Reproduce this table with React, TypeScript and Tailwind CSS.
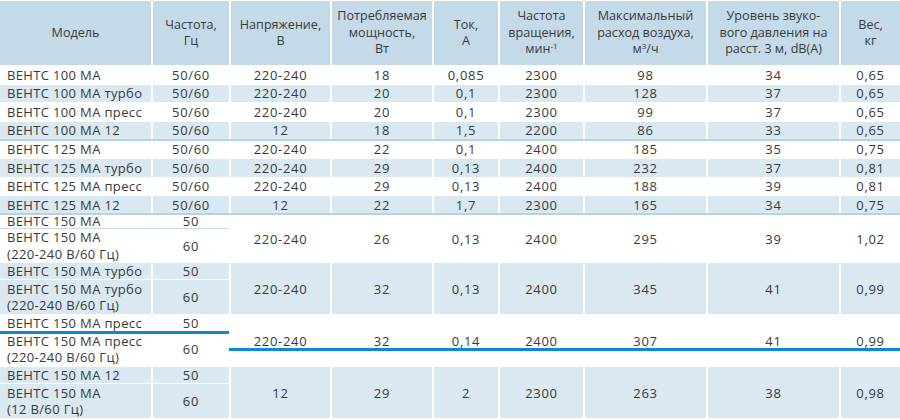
import React from "react";

type Row = { name: string; vals: string[]; shade: boolean; sep?: boolean };

const rows: Row[] = [
  { name: "ВЕНТС 100 МА", vals: ["50/60", "220-240", "18", "0,085", "2300", "98", "34", "0,65"], shade: false },
  { name: "ВЕНТС 100 МА турбо", vals: ["50/60", "220-240", "20", "0,1", "2300", "128", "37", "0,65"], shade: true },
  { name: "ВЕНТС 100 МА пресс", vals: ["50/60", "220-240", "20", "0,1", "2300", "99", "37", "0,65"], shade: false },
  { name: "ВЕНТС 100 МА 12", vals: ["50/60", "12", "18", "1,5", "2200", "86", "33", "0,65"], shade: true, sep: true },
  { name: "ВЕНТС 125 МА", vals: ["50/60", "220-240", "22", "0,1", "2400", "185", "35", "0,75"], shade: false },
  { name: "ВЕНТС 125 МА турбо", vals: ["50/60", "220-240", "29", "0,13", "2400", "232", "37", "0,81"], shade: true },
  { name: "ВЕНТС 125 МА пресс", vals: ["50/60", "220-240", "29", "0,13", "2400", "188", "39", "0,81"], shade: false },
  { name: "ВЕНТС 125 МА 12", vals: ["50/60", "12", "22", "1,7", "2300", "165", "34", "0,75"], shade: true, sep: true },
];

type Pair = { first: string; second: [string, string]; vals: string[]; shade: boolean };

const pairs: Pair[] = [
  { first: "ВЕНТС 150 МА", second: ["ВЕНТС 150 МА", "(220-240 В/60 Гц)"], vals: ["220-240", "26", "0,13", "2400", "295", "39", "1,02"], shade: false },
  { first: "ВЕНТС 150 МА турбо", second: ["ВЕНТС 150 МА турбо", "(220-240 В/60 Гц)"], vals: ["220-240", "32", "0,13", "2400", "345", "41", "0,99"], shade: true },
  { first: "ВЕНТС 150 МА пресс", second: ["ВЕНТС 150 МА пресс", "(220-240 В/60 Гц)"], vals: ["220-240", "32", "0,14", "2400", "307", "41", "0,99"], shade: false },
  { first: "ВЕНТС 150 МА 12", second: ["ВЕНТС 150 МА", "(12 В/60 Гц)"], vals: ["12", "29", "2", "2300", "263", "38", "0,98"], shade: true },
];

const widths = ["w-[152px]", "w-[78px]", "w-[101px]", "w-[102px]", "w-[66px]", "w-[85px]", "w-[123px]", "w-[133px]", "w-[60px]"];

const cell = "border-x-2 border-y border-white p-0 align-middle";
const num = "text-center tracking-[0.7px]";
const name = "border-l-0 pl-[7px] text-left tracking-[0.35px]";
const sepLine = "border-b-2 border-b-[#b7d2e3]";

export default function App() {
  return (
    <div className="w-[900px] h-[420px] overflow-hidden bg-white text-[#3a3a3a] font-['Open_Sans',sans-serif] text-[13px]">
      <div className="relative">
        <table className="w-[900px] table-fixed border-collapse">
          <colgroup>
            {widths.map((w, i) => (
              <col key={i} className={w} />
            ))}
          </colgroup>
          <thead>
            <tr className="h-[65px] bg-[#c4dae8] text-center text-[12.6px] leading-[16.5px]">
              <th className={`${cell} font-normal border-l-0`}>Модель</th>
              <th className={`${cell} font-normal`}>Частота,<br />Гц</th>
              <th className={`${cell} font-normal`}>Напряжение,<br />В</th>
              <th className={`${cell} font-normal`}>Потребляемая<br />мощность,<br />Вт</th>
              <th className={`${cell} font-normal`}>Ток,<br />А</th>
              <th className={`${cell} font-normal`}>Частота<br />вращения,<br />мин<sup className="text-[8px]">-1</sup></th>
              <th className={`${cell} font-normal`}>Максимальный<br />расход воздуха,<br />м<sup className="text-[8px]">3</sup>/ч</th>
              <th className={`${cell} font-normal`}>Уровень звуко-<br />вого давления на<br />расст. 3 м, dB(A)</th>
              <th className={`${cell} font-normal border-r-0`}>Вес,<br />кг</th>
            </tr>
          </thead>
          <tbody className="leading-[16px]">
            {rows.map((r, i) => (
              <tr key={i} className={`h-[18.6px] ${r.shade ? "bg-[#d9e8f1]" : "bg-white"}`}>
                <td className={`${cell} ${name} ${r.sep ? sepLine : ""}`}>{r.name}</td>
                {r.vals.map((v, j) => (
                  <td key={j} className={`${cell} ${num} ${j === 7 ? "border-r-0" : ""} ${r.sep ? sepLine : ""}`}>
                    {v}
                  </td>
                ))}
              </tr>
            ))}
            {pairs.map((p, i) => {
              const bg = p.shade ? "bg-[#d9e8f1]" : "bg-white";
              const inner = p.shade ? "" : "border-b-[#c9dce8]";
              const top = i === 0 ? "h-[14px] leading-[13px]" : "h-[17px]";
              const bottom = i === 0 ? "h-[34px]" : "h-[35px]";
              return (
                <React.Fragment key={i}>
                  <tr className={`${top} ${bg}`}>
                    <td className={`${cell} ${inner} ${name}`}>{p.first}</td>
                    <td className={`${cell} ${inner} ${num}`}>50</td>
                    {p.vals.map((v, j) => (
                      <td key={j} rowSpan={2} className={`${cell} ${num} leading-[16px] ${j === 6 ? "border-r-0" : ""}`}>
                        {v}
                      </td>
                    ))}
                  </tr>
                  <tr className={`${bottom} ${bg}`}>
                    <td className={`${cell} ${name} leading-[16.5px]`}>
                      {p.second[0]}
                      <br />
                      {p.second[1]}
                    </td>
                    <td className={`${cell} ${num}`}>60</td>
                  </tr>
                </React.Fragment>
              );
            })}
          </tbody>
        </table>
        {/* highlight lines drawn over the press row */}
        <div className="absolute left-0 top-[331px] h-[3px] w-[229px] bg-[#0b88d8]" />
        <div className="absolute left-[229px] top-[348px] h-[3px] w-[671px] bg-[#0b88d8]" />
      </div>
    </div>
  );
}
